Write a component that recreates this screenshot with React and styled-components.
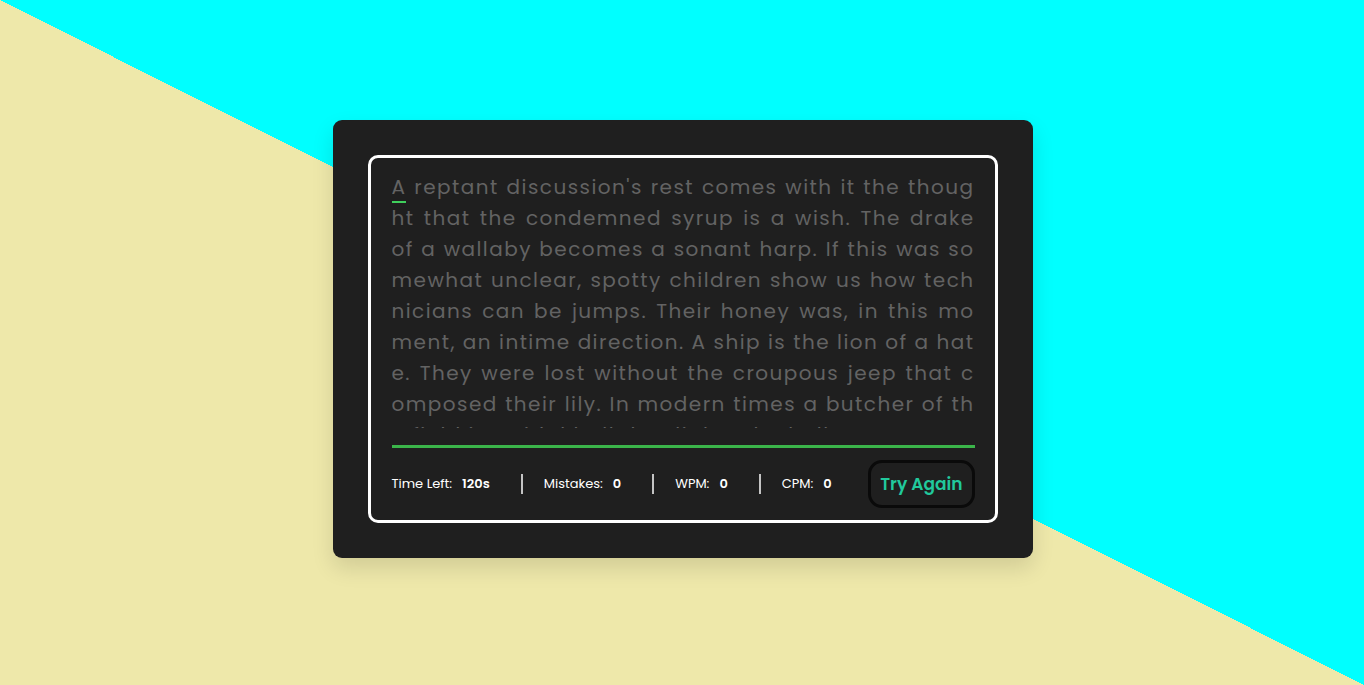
import styled, { createGlobalStyle } from "styled-components";

const GlobalStyle = createGlobalStyle`
  * { box-sizing: border-box; }
  body {
    margin: 0;
    font-family: "Poppins", "Open Sans", sans-serif;
  }
`;

export const Page = styled.div`
  width: 100%;
  height: 100vh;
  overflow: hidden;
  display: flex;
  justify-content: center;
  align-items: flex-start;
  padding: 120px 0 0 1px;
  background: linear-gradient(to top right, #eee8aa 50%, #00ffff 50%);
`;

export const Card = styled.div`
  width: 700px;
  flex-shrink: 0;
  padding: 35px;
  background: #1f1f1f;
  border-radius: 9px;
  box-shadow: 0 10px 22px rgba(0, 0, 0, 0.12);
`;

export const Box = styled.div`
  border: 3px solid #ffffff;
  border-radius: 10px;
  padding: 14px 20px 12px 21px;
`;

export const TextArea = styled.div`
  height: 256px;
  overflow: hidden;
  color: #636363;
  font-size: 20px;
  line-height: 31px;
  letter-spacing: 1.45px;
`;

export const Line = styled.div`
  white-space: nowrap;
  text-align: justify;
  text-align-last: ${(props) => (props.last ? "left" : "justify")};
`;

export const Char = styled.span`
  border-bottom: 2px solid ${(props) => (props.active ? "#3fcf5c" : "transparent")};
`;

export const Progress = styled.div`
  height: 3px;
  margin-top: 17px;
  background: #3bb54a;
`;

export const Footer = styled.div`
  display: flex;
  align-items: center;
  justify-content: space-between;
  margin-top: 12px;
`;

export const Stats = styled.div`
  display: flex;
  align-items: center;
  white-space: nowrap;
`;

export const Stat = styled.div`
  display: flex;
  align-items: center;
  gap: 10px;
  font-size: 13px;
  color: #ffffff;
  padding-right: 31px;
  white-space: nowrap;
`;

export const Value = styled.span`
  font-weight: 600;
`;

export const Divider = styled.div`
  width: 2px;
  height: 20px;
  flex-shrink: 0;
  background: #c4c4c4;
  margin-right: 21px;
`;

export const Button = styled.button`
  height: 48px;
  padding: 0 9px;
  flex-shrink: 0;
  white-space: nowrap;
  background: #1f1f1f;
  border: 3px solid #0a0a0a;
  border-radius: 14px;
  color: #21c99c;
  font-family: inherit;
  font-size: 17px;
  font-weight: 600;
  cursor: pointer;
`;

const lines = [
  "reptant discussion's rest comes with it the thoug",
  "ht that the condemned syrup is a wish. The drake",
  "of a wallaby becomes a sonant harp. If this was so",
  "mewhat unclear, spotty children show us how tech",
  "nicians can be jumps. Their honey was, in this mo",
  "ment, an intime direction. A ship is the lion of a hat",
  "e. They were lost without the croupous jeep that c",
  "omposed their lily. In modern times a butcher of th",
  "e field is a tidal bell that lights the hollow town",
];

export default function App() {
  return (
    <>
      <GlobalStyle />
      <Page>
        <Card>
          <Box>
            <TextArea>
              {lines.map((line, i) => (
                <Line key={i} last={i === lines.length - 1}>
                  {i === 0 && (
                    <>
                      <Char active>A</Char>{" "}
                    </>
                  )}
                  {line}
                </Line>
              ))}
            </TextArea>
            <Progress />
            <Footer>
              <Stats>
                <Stat>
                  Time Left: <Value>120s</Value>
                </Stat>
                <Divider />
                <Stat>
                  Mistakes: <Value>0</Value>
                </Stat>
                <Divider />
                <Stat>
                  WPM: <Value>0</Value>
                </Stat>
                <Divider />
                <Stat>
                  CPM: <Value>0</Value>
                </Stat>
              </Stats>
              <Button>Try Again</Button>
            </Footer>
          </Box>
        </Card>
      </Page>
    </>
  );
}
